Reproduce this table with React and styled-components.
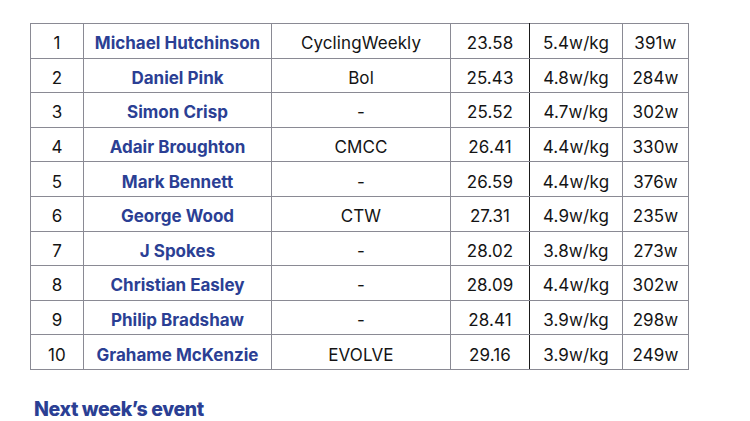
import React from 'react';
import styled, { createGlobalStyle } from 'styled-components';

const GlobalStyle = createGlobalStyle`
  body {
    margin: 0;
    background: #ffffff;
    font-family: Inter, "Noto Sans", sans-serif;
  }
`;

const Page = styled.div`
  padding: 23px 0 0 30px;
  width: 750px;
  height: 421px;
  box-sizing: border-box;
`;

const Table = styled.table`
  border-collapse: collapse;
  table-layout: fixed;
  border: 1px solid #8a8a94;
`;

const Cell = styled.td`
  width: ${({ w }) => w}px;
  height: 28.6px;
  padding: 5px 0 0;
  text-align: center;
  border: 1px solid #8a8a94;
  border-right-color: ${({ dark }) => (dark ? '#1a1a1a' : '#8a8a94')};
  color: #141414;
  font-size: 17px;
  font-weight: 400;
  letter-spacing: 0.1px;
`;

const NameCell = styled(Cell)`
  color: #2b3f94;
  font-size: 17px;
  font-weight: 700;
  letter-spacing: 0;
`;

const Heading = styled.h2`
  margin: 27px 0 0 4px;
  color: #2b3f94;
  font-size: 19.5px;
  font-weight: 800;
  letter-spacing: -0.4px;
`;

const rows = [
  [1, 'Michael Hutchinson', 'CyclingWeekly', '23.58', '5.4w/kg', '391w'],
  [2, 'Daniel Pink', 'Bol', '25.43', '4.8w/kg', '284w'],
  [3, 'Simon Crisp', '-', '25.52', '4.7w/kg', '302w'],
  [4, 'Adair Broughton', 'CMCC', '26.41', '4.4w/kg', '330w'],
  [5, 'Mark Bennett', '-', '26.59', '4.4w/kg', '376w'],
  [6, 'George Wood', 'CTW', '27.31', '4.9w/kg', '235w'],
  [7, 'J Spokes', '-', '28.02', '3.8w/kg', '273w'],
  [8, 'Christian Easley', '-', '28.09', '4.4w/kg', '302w'],
  [9, 'Philip Bradshaw', '-', '28.41', '3.9w/kg', '298w'],
  [10, 'Grahame McKenzie', 'EVOLVE', '29.16', '3.9w/kg', '249w'],
];

const App = () => (
  <Page>
    <GlobalStyle />
    <Table>
      <tbody>
        {rows.map(([pos, name, club, time, wkg, watts]) => (
          <tr key={pos}>
            <Cell w={52}>{pos}</Cell>
            <NameCell w={187}>{name}</NameCell>
            <Cell w={178}>{club}</Cell>
            <Cell w={78} dark>{time}</Cell>
            <Cell w={92}>{wkg}</Cell>
            <Cell w={65}>{watts}</Cell>
          </tr>
        ))}
      </tbody>
    </Table>
    <Heading>Next week’s event</Heading>
  </Page>
);

export default App;
